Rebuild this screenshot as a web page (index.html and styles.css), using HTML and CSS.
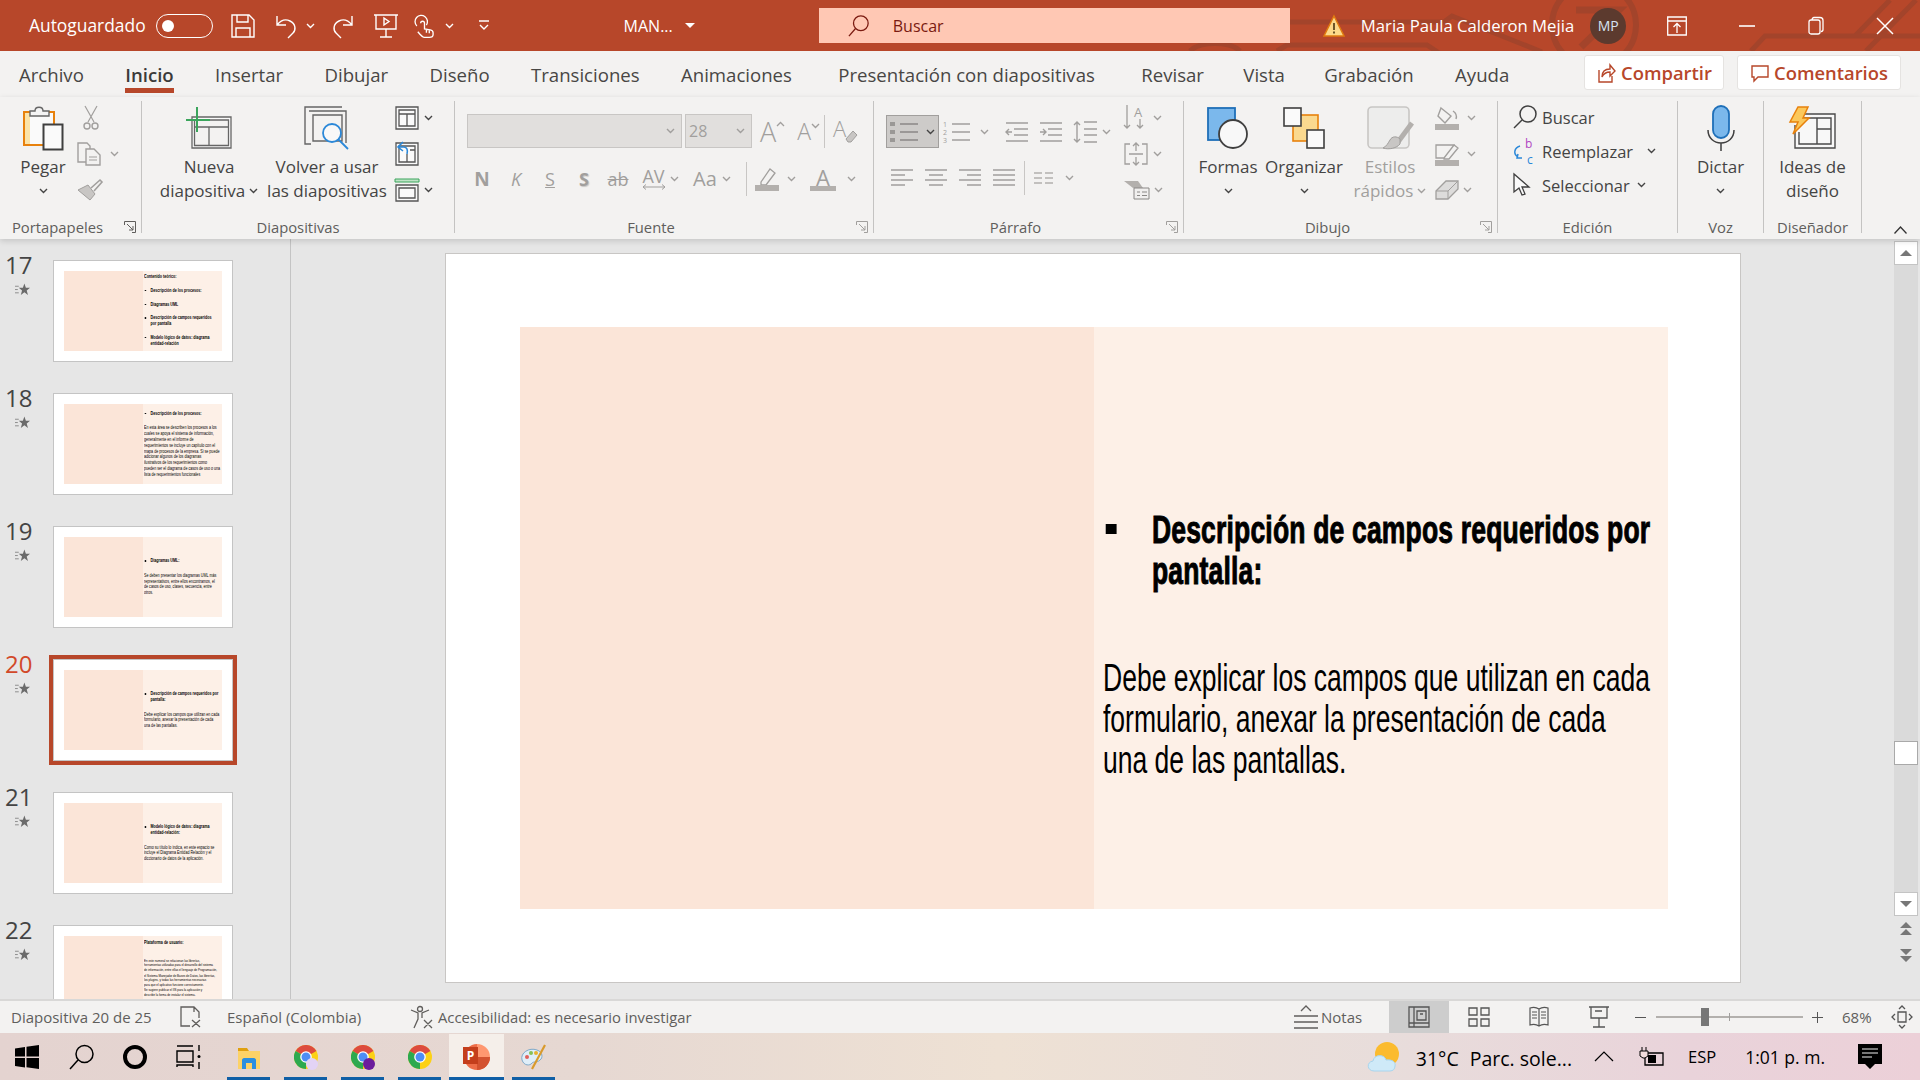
FILE: index.html
```html
<!DOCTYPE html>
<html lang="es">
<head>
  <meta charset="UTF-8">
  <title>MAN... - PowerPoint</title>
  <link rel="stylesheet" href="styles.css">
</head>
<body>

<svg class="defs" width="0" height="0">
  <symbol id="chev" viewBox="0 0 9 6"><path d="M1 1l3.5 3.5L8 1" fill="none" stroke="currentColor" stroke-width="1.4"/></symbol>
  <symbol id="launch" viewBox="0 0 12 12"><path d="M.5 4V.5h11v11H8M3 3l6 6M5 9h4V5" fill="none" stroke="currentColor"/></symbol>
  <symbol id="star" viewBox="0 0 16 14"><path d="M10 0l1.600 4.600h4.400l-3.500 2.900 1.300 4.800-3.800-2.800-3.800 2.800 1.300-4.800-3.500-2.900h4.400z" fill="#6b6b6b"/><path d="M0 3h4M0 6.500h3M0 10h4" stroke="#8a8a8a"/></symbol>
  <symbol id="chrome" viewBox="0 0 24 24">
    <circle cx="12" cy="12" r="12" fill="#fcd116"/>
    <path d="M12 12L1.600 6A12 12 0 0 1 22.400 6Z" fill="#dd4b3e"/>
    <path d="M12 12L12 24A12 12 0 0 1 1.600 6Z" fill="#2da94f"/>
    <circle cx="12" cy="12" r="5.800" fill="#fff"/><circle cx="12" cy="12" r="4.500" fill="#4e8df5"/>
  </symbol>
</svg>

<div class="app">

  <header class="titlebar">
    <svg class="title-pattern" viewBox="0 0 1920 51" width="1920" height="51">
      <g fill="none" stroke="#a3442b" stroke-width="5">
        <path d="M1290 22h154l8-6 90 36M1277 51l10-6h140l12 8"/>
        <circle cx="1594" cy="25" r="42" stroke-width="6"/>
        <path d="M1576 10h43l-38 37" stroke-width="7"/>
        <path d="M1751 51l14-15h155M1855 36l35-36M1866 51l50-51"/>
        <path d="M1190 51c10-10 40-10 50 0"/>
      </g>
    </svg>
    <span class="title-text autosave">Autoguardado</span>
    <span class="toggle"><i></i></span>
    <svg class="qat save" viewBox="0 0 24 24"><path d="M1 1h17l5 5v17H1zM6 1v7h11V1M5 23v-9h14v9"/></svg>
    <svg class="qat undo" viewBox="0 0 24 24"><path d="M3 2v9h9M3 11c4-5 9-6 13-4 6 3 6 9 3 12l-5 5"/></svg>
    <svg class="qat-chev chev-undo"><use href="#chev"/></svg>
    <svg class="qat redo" viewBox="0 0 24 24"><path d="M21 2v9h-9M21 11c-4-5-9-6-13-4-6 3-6 9-3 12l5 5"/></svg>
    <svg class="qat present" viewBox="0 0 24 24"><path d="M0 1h24M2 1v14h20V1M12 15v8M6 23h12M10 4l5 3.500-5 3.500z"/></svg>
    <svg class="qat touch" viewBox="0 0 22 24"><path d="M3 12a6.500 6.500 0 1 1 10-1M7 9a2 2 0 0 1 4 0v6l6 1c2 .5 3 2 3 3v2c0 2-2 3-4 3h-5c-2 0-3-1-7-6M13 16v3M16 16.500v3"/></svg>
    <svg class="qat-chev chev-touch"><use href="#chev"/></svg>
    <svg class="qat more" viewBox="0 0 12 12"><path d="M1 1h10M2 5l4 4 4-4"/></svg>
    <span class="title-text file-name">MAN...</span>
    <span class="caret"></span>
    <div class="search">
      <svg viewBox="0 0 24 24" width="22" height="24"><circle cx="14" cy="9" r="8"/><path d="M8 15L1 23"/></svg>
      <span>Buscar</span>
    </div>
    <svg class="warn" viewBox="0 0 22 22" width="22" height="22"><path d="M11 1l10 20H1z" fill="#fcd98a" stroke="#e07b10" stroke-width="1.500"/><path d="M11 8v7M11 16.500v2" stroke="#4a3510" stroke-width="1.600"/></svg>
    <span class="title-text user-name">Maria Paula Calderon Mejia</span>
    <span class="avatar">MP</span>
    <svg class="win-btn ribbon-opts" viewBox="0 0 20 20"><path d="M.7 1h18.600v18H.7zM.7 5h18.600M10 17v-9M6.500 11L10 7.500l3.500 3.500"/></svg>
    <svg class="win-btn win-min" viewBox="0 0 16 20"><path d="M0 10h16" stroke-width="1.600"/></svg>
    <svg class="win-btn win-max" viewBox="0 0 16 20"><path d="M1 6c0-1 1-2 2-2h7c1 0 2 1 2 2v10c0 1-1 2-2 2H3c-1 0-2-1-2-2zM4 4c0-1.500 1-2.500 2-2.500h6c2 0 3 1 3 3v9c0 1-.5 2-2 2"/></svg>
    <svg class="win-btn win-close" viewBox="0 0 16 20"><path d="M0 2l16 16M16 2L0 18" stroke-width="1.500"/></svg>
  </header>

  <nav class="tabs">
    <span class="tab first">Archivo</span>
    <span class="tab active">Inicio</span>
    <span class="tab">Insertar</span>
    <span class="tab">Dibujar</span>
    <span class="tab">Diseño</span>
    <span class="tab">Transiciones</span>
    <span class="tab">Animaciones</span>
    <span class="tab wide">Presentación con diapositivas</span>
    <span class="tab wide">Revisar</span>
    <span class="tab narrow">Vista</span>
    <span class="tab narrow">Grabación</span>
    <span class="tab">Ayuda</span>
    <div class="share-btns">
      <span class="share-btn share">
        <svg viewBox="0 0 18 20" width="18" height="20"><path d="M1 7v12h13v-6M4 14c0-6 4-8 8-8V2l5 6-5 5V9c-4 0-6 1-8 5z" fill="none" stroke="#b7472a" stroke-width="1.400"/></svg>
        Compartir
      </span>
      <span class="share-btn comments">
        <svg viewBox="0 0 18 20" width="18" height="20"><path d="M1 3h16v11H7l-4 4v-4H1z" fill="none" stroke="#b7472a" stroke-width="1.400"/></svg>
        Comentarios
      </span>
    </div>
  </nav>

  <section class="ribbon">

    <div class="group g-clip has-launcher">
      <div class="group-body">
        <div class="big-btn pegar">
          <div class="big-icon">
            <svg viewBox="0 0 41 45" width="41" height="45">
              <rect x="1" y="6" width="30" height="33" fill="#fbe3a8" stroke="#e8810c" stroke-width="2"/>
              <rect x="7" y="7" width="23" height="31" fill="#fafafa"/>
              <path d="M7 10V5h5c0-5 8-5 8 0h6v5z" fill="#f4f4f4" stroke="#666" stroke-width="1.400"/>
              <rect x="20.500" y="18.500" width="19" height="25" fill="#fafafa" stroke="#3f3f3f" stroke-width="2"/>
            </svg>
          </div>
          <span class="big-line">Pegar</span>
          <svg class="chev dark"><use href="#chev"/></svg>
        </div>
        <div class="tool-col">
          <div class="tool-row"><svg class="i-cut" viewBox="0 0 16 24" width="16" height="24"><path d="M2 0l9 16M14 0L5 16" stroke="#a19f9d" fill="none" stroke-width="1.200"/><circle cx="4" cy="20" r="3" fill="none" stroke="#a19f9d" stroke-width="1.400"/><circle cx="12" cy="20" r="3" fill="none" stroke="#a19f9d" stroke-width="1.400"/></svg></div>
          <div class="tool-row"><svg viewBox="0 0 25 24" width="25" height="24"><path d="M9 20H1V1h9l3 3v3M9 7h8l6 6v10H9z" fill="none" stroke="#a19f9d" stroke-width="1.400"/><path d="M12 15h8M12 18h8" stroke="#a19f9d"/></svg><svg class="chev off gap-m"><use href="#chev"/></svg></div>
          <div class="tool-row"><svg viewBox="0 0 26 22" width="26" height="22"><path d="M1 11l12 10 5-6-7-9z" fill="#c8c6c4" stroke="#a19f9d"/><path d="M14 9l9-8 2 2-8 9" fill="none" stroke="#a19f9d" stroke-width="1.600"/></svg></div>
        </div>
      </div>
      <div class="group-label">Portapapeles</div>
      <svg class="launcher dark"><use href="#launch"/></svg>
    </div>

    <div class="group g-slides">
      <div class="group-body">
        <div class="big-btn nueva">
          <div class="big-icon">
            <svg viewBox="0 0 46 42" width="46" height="42">
              <path d="M6 10h39v31H6zM8.500 13v25.500h34V13zM9 20h33M23 20v18" fill="#fafafa" stroke="#666" stroke-width="1.300"/>
              <path d="M11 0v25M0 13h24" stroke="#3ba55c" stroke-width="2"/>
            </svg>
          </div>
          <span class="big-line">Nueva</span>
          <span class="big-line">diapositiva <svg class="chev dark"><use href="#chev"/></svg></span>
        </div>
        <div class="big-btn volver">
          <div class="big-icon">
            <svg viewBox="0 0 46 44" width="46" height="44">
              <path d="M38 1H1v37h6M5 5h37v32M9 9h29v26H9z" fill="none" stroke="#666" stroke-width="1.400"/>
              <circle cx="28" cy="27" r="9" fill="#f8f8f8" stroke="#2b88d8" stroke-width="1.800"/>
              <path d="M34 33l10 10" stroke="#2b88d8" stroke-width="1.800"/>
            </svg>
          </div>
          <span class="big-line">Volver a usar</span>
          <span class="big-line">las diapositivas</span>
        </div>
        <div class="tool-col">
          <div class="tool-row"><svg viewBox="0 0 24 24" width="24" height="24"><path d="M1 1h22v22H1zM4 4h16v16H4zM4 8h16M12 8v12" fill="#fafafa" stroke="#555" stroke-width="1.300"/></svg><svg class="chev dark gap-s"><use href="#chev"/></svg></div>
          <div class="tool-row"><svg viewBox="0 0 24 24" width="24" height="24"><path d="M1 1h22v22H1zM4 4h16v16H4zM15 8h5M12 12v8" fill="#fafafa" stroke="#555" stroke-width="1.300"/><path d="M8 0L3 5l5 4M3 5h6c3 0 4 3 3 7" fill="none" stroke="#2b88d8" stroke-width="1.600"/></svg></div>
          <div class="tool-row"><svg viewBox="0 0 24 24" width="24" height="24"><path d="M0 1h24v3H0z" fill="#bfe3c6" stroke="#3ba55c"/><path d="M1 7h22v16H1zM4 10h16v10H4z" fill="#fafafa" stroke="#555" stroke-width="1.300"/></svg><svg class="chev dark gap-s"><use href="#chev"/></svg></div>
        </div>
      </div>
      <div class="group-label">Diapositivas</div>
    </div>

    <div class="group g-font has-launcher">
      <div class="group-body stacked">
        <div class="font-row1">
          <span class="combo combo-font"><svg class="chev off"><use href="#chev"/></svg></span>
          <span class="combo combo-size"><b>28</b><svg class="chev off"><use href="#chev"/></svg></span>
          <span class="grow-a big">A<svg class="mini" viewBox="0 0 9 6"><path d="M1 5l3.500-3.500L8 5" fill="none" stroke="#a19f9d" stroke-width="1.300"/></svg></span>
          <span class="grow-a small">A<svg class="mini"><use href="#chev"/></svg></span>
          <i class="v-sep"></i>
          <svg class="clear-fmt" viewBox="0 0 24 24" width="24" height="24"><text x="0" y="18" class="clear-a">A</text><path d="M13 20l7-8 4 4-6 7h-3z" fill="#c8c6c4" stroke="#a19f9d"/></svg>
        </div>
        <div class="font-row2">
          <span class="fmt bold">N</span>
          <span class="fmt ital">K</span>
          <span class="fmt under">S</span>
          <span class="fmt shadow">S</span>
          <span class="fmt strike">ab</span>
          <span class="fmt kern"><span class="kern-stack">AV<svg viewBox="0 0 22 6" width="22" height="6"><path d="M0 3h22M3 .5L0 3l3 2.500M19 .5L22 3l-3 2.500" fill="none" stroke="#a19f9d"/></svg></span><svg class="chev off"><use href="#chev"/></svg></span>
          <span class="fmt case">Aa<svg class="chev off"><use href="#chev"/></svg></span>
          <i class="v-sep low"></i>
          <svg class="hi-icon" viewBox="0 0 24 24" width="24" height="24"><path d="M6 15L15 2l5 4-9 12H6z" fill="none" stroke="#a19f9d" stroke-width="1.300"/><path d="M0 18h24v6H0z" fill="#b3b0ad"/></svg>
          <svg class="chev off gap-m"><use href="#chev"/></svg>
          <span class="color-a">A</span>
          <svg class="chev off gap-l"><use href="#chev"/></svg>
        </div>
      </div>
      <div class="group-label">Fuente</div>
      <svg class="launcher off"><use href="#launch"/></svg>
    </div>

    <div class="group g-para has-launcher">
      <div class="group-body">
        <div class="para-left stacked">
          <div class="para-row1">
            <span class="bullets-btn">
              <svg viewBox="0 0 30 24" width="30" height="24"><path d="M0 2h5v4H0zM0 10h5v4H0zM0 18h5v4H0z" fill="#9a9896"/><path d="M10 4h18M10 12h18M10 20h18" stroke="#8a8886" stroke-width="1.500"/></svg>
              <svg class="chev dark"><use href="#chev"/></svg>
            </span>
            <svg class="gap-num" viewBox="0 0 28 24" width="28" height="24"><text x="0" y="7" class="tiny-num">1</text><text x="0" y="15" class="tiny-num">2</text><text x="0" y="23" class="tiny-num">3</text><path d="M9 4h18M9 12h18M9 20h18" stroke="#a19f9d" stroke-width="1.400"/></svg>
            <svg class="chev off gap-num-chev"><use href="#chev"/></svg>
            <svg class="gap-in" viewBox="0 0 22 24" width="22" height="24"><path d="M0 3h22M8 9h14M8 15h14M0 21h22M6 12H0m3-3l-3 3 3 3" fill="none" stroke="#a19f9d" stroke-width="1.400"/></svg>
            <svg class="gap-12" viewBox="0 0 22 24" width="22" height="24"><path d="M0 3h22M8 9h14M8 15h14M0 21h22M0 12h6m-3-3l3 3-3 3" fill="none" stroke="#a19f9d" stroke-width="1.400"/></svg>
            <svg class="gap-11" viewBox="0 0 25 26" width="25" height="26"><path d="M4 3v20M1 6l3-3 3 3M1 20l3 3 3-3M11 3h13M11 10h13M11 16h13M11 23h13" fill="none" stroke="#a19f9d" stroke-width="1.400"/></svg>
            <svg class="chev off gap-xs"><use href="#chev"/></svg>
          </div>
          <div class="para-row2">
            <svg viewBox="0 0 22 20" width="22" height="20"><path d="M0 2h22M0 7h14M0 12h22M0 17h14" stroke="#a19f9d" stroke-width="1.400"/></svg>
            <svg viewBox="0 0 22 20" width="22" height="20"><path d="M0 2h22M4 7h14M0 12h22M4 17h14" stroke="#a19f9d" stroke-width="1.400"/></svg>
            <svg viewBox="0 0 22 20" width="22" height="20"><path d="M0 2h22M8 7h14M0 12h22M8 17h14" stroke="#a19f9d" stroke-width="1.400"/></svg>
            <svg viewBox="0 0 22 20" width="22" height="20"><path d="M0 2h22M0 7h22M0 12h22M0 17h22" stroke="#a19f9d" stroke-width="1.400"/></svg>
            <i class="v-sep low"></i>
            <svg class="cols" viewBox="0 0 19 12" width="19" height="12"><path d="M0 1h8M11 1h8M0 6h8M11 6h8M0 11h8M11 11h8" stroke="#b3b0ad" stroke-width="1.300"/></svg>
            <svg class="chev off"><use href="#chev"/></svg>
          </div>
        </div>
        <div class="tool-col">
          <div class="tool-row"><svg viewBox="0 0 24 26" width="24" height="26"><path d="M3 0v23M0 20l3 3 3-3M16 14v9M13 20l3 3 3-3" fill="none" stroke="#a19f9d" stroke-width="1.300"/><text x="10" y="12" class="tiny-a">A</text></svg><svg class="chev off gap-s"><use href="#chev"/></svg></div>
          <div class="tool-row"><svg viewBox="0 0 24 24" width="24" height="24"><path d="M6 2H1v20h5M18 2h5v20h-5M5 12h14M12 1v8M9 4l3-3 3 3M12 15v8M9 20l3 3 3-3" fill="none" stroke="#a19f9d" stroke-width="1.300"/></svg><svg class="chev off gap-s"><use href="#chev"/></svg></div>
          <div class="tool-row"><svg viewBox="0 0 26 20" width="26" height="20"><path d="M0 1h14l5 7H9z" fill="#b3b0ad"/><path d="M10 8h15v11H10zM13 12h3M18 12h5M13 15.500h3M18 15.500h5" fill="#f0efee" stroke="#8a8886"/></svg><svg class="chev off gap-xs"><use href="#chev"/></svg></div>
        </div>
      </div>
      <div class="group-label">Párrafo</div>
      <svg class="launcher off"><use href="#launch"/></svg>
    </div>

    <div class="group g-draw has-launcher">
      <div class="group-body">
        <div class="big-btn formas">
          <div class="big-icon">
            <svg viewBox="0 0 42 42" width="42" height="42"><rect x="1" y="1" width="27" height="32" fill="#7bb8ec" stroke="#1e6fb8" stroke-width="1.800"/><circle cx="26" cy="27" r="14" fill="#f8f8f8" stroke="#3f3f3f" stroke-width="1.800"/></svg>
          </div>
          <span class="big-line">Formas</span>
          <svg class="chev dark"><use href="#chev"/></svg>
        </div>
        <div class="big-btn organizar">
          <div class="big-icon">
            <svg viewBox="0 0 42 42" width="42" height="42"><rect x="10" y="8" width="25" height="26" fill="#fad98f" stroke="#e8810c" stroke-width="1.600"/><rect x="1" y="1" width="17" height="18" fill="#fafafa" stroke="#3f3f3f" stroke-width="1.600"/><rect x="24" y="23" width="17" height="18" fill="#fafafa" stroke="#3f3f3f" stroke-width="1.600"/></svg>
          </div>
          <span class="big-line">Organizar</span>
          <svg class="chev dark"><use href="#chev"/></svg>
        </div>
        <div class="big-btn off-text estilos">
          <div class="big-icon">
            <svg viewBox="0 0 46 44" width="46" height="44"><rect x="1" y="1" width="41" height="41" rx="4" fill="#ededec" stroke="#c8c6c4" stroke-width="1.600"/><path d="M45 17L31 36" stroke="#b3b0ad" stroke-width="5"/><path d="M33 33c-3-3-8-3-10 1-2 3-3 6-7 8 6 2 14 0 17-4z" fill="#c8c6c4" stroke="#a19f9d"/></svg>
          </div>
          <span class="big-line">Estilos</span>
          <span class="big-line">rápidos <svg class="chev off"><use href="#chev"/></svg></span>
        </div>
        <div class="tool-col">
          <div class="tool-row"><svg viewBox="0 0 24 24" width="24" height="24"><path d="M6 2l10 8-6 7-7-7zM18 5c3 2 4 5 3 8" fill="none" stroke="#a19f9d" stroke-width="1.400"/><path d="M0 18h24v6H0z" fill="#b3b0ad"/></svg><svg class="chev off gap-m"><use href="#chev"/></svg></div>
          <div class="tool-row"><svg viewBox="0 0 24 24" width="24" height="24"><path d="M20 3H1v13h8M9 16l10-13 4 3-9 11h-5z" fill="none" stroke="#a19f9d" stroke-width="1.300"/><path d="M0 18h24v6H0z" fill="#b3b0ad"/></svg><svg class="chev off gap-m"><use href="#chev"/></svg></div>
          <div class="tool-row"><svg viewBox="0 0 24 20" width="24" height="20"><path d="M1 11L11 1h12v8L13 19H1z" fill="#dddcdb" stroke="#a19f9d" stroke-width="1.300"/><path d="M1 11h12v8M13 11L23 1" fill="none" stroke="#a19f9d"/></svg><svg class="chev off gap-xs"><use href="#chev"/></svg></div>
        </div>
      </div>
      <div class="group-label">Dibujo</div>
      <svg class="launcher off"><use href="#launch"/></svg>
    </div>

    <div class="group g-edit">
      <div class="group-body edit-rows">
        <div class="edit-row"><span class="edit-ico"><svg viewBox="0 0 24 24" width="24" height="24"><circle cx="15" cy="9" r="8" fill="none" stroke="#3f3f3f" stroke-width="1.500"/><path d="M9 15L1 23" stroke="#3f3f3f" stroke-width="1.500"/></svg></span>Buscar</div>
        <div class="edit-row"><span class="edit-ico"><svg viewBox="0 0 24 26" width="24" height="26"><text x="12" y="10" class="rep-b">b</text><text x="14" y="26" class="rep-c">c</text><path d="M7 8c-6 2-7 8-2 11M9 20H4l1-4" fill="none" stroke="#2b88d8" stroke-width="1.500"/></svg></span>Reemplazar<svg class="chev dark chev-rep"><use href="#chev"/></svg></div>
        <div class="edit-row"><span class="edit-ico"><svg viewBox="0 0 17 24" width="17" height="24"><path d="M1 1v18l5-4 3 7 3-1-3-7h7z" fill="#fafafa" stroke="#3f3f3f" stroke-width="1.300"/></svg></span>Seleccionar<svg class="chev dark chev-sel"><use href="#chev"/></svg></div>
      </div>
      <div class="group-label">Edición</div>
    </div>

    <div class="group g-voice">
      <div class="group-body">
        <div class="big-btn full">
          <div class="big-icon">
            <svg viewBox="0 0 28 46" width="28" height="46"><rect x="6" y="1" width="16" height="32" rx="8" fill="#7bb8ec" stroke="#1e6fb8" stroke-width="1.800"/><path d="M1 25c0 8 6 13 13 13s13-5 13-13M14 38v8" fill="none" stroke="#3f3f3f" stroke-width="1.500"/></svg>
          </div>
          <span class="big-line">Dictar</span>
          <svg class="chev dark"><use href="#chev"/></svg>
        </div>
      </div>
      <div class="group-label">Voz</div>
    </div>

    <div class="group g-design">
      <div class="group-body">
        <div class="big-btn full">
          <div class="big-icon">
            <svg viewBox="0 0 46 42" width="46" height="42"><path d="M10 7h35v34H5V18M13 11h28v26H9v-12M27 11v26M27 22h14" fill="#f8f8f8" stroke="#4a4a4a" stroke-width="1.400"/><path d="M8 0h10l-5 11h6L3 27l5-12H0z" fill="#fbc85b" stroke="#e8810c" stroke-width="1.500"/></svg>
          </div>
          <span class="big-line">Ideas de</span>
          <span class="big-line">diseño</span>
        </div>
      </div>
      <div class="group-label">Diseñador</div>
    </div>

    <svg class="collapse" viewBox="0 0 13 8" width="13" height="8"><path d="M.5 7.500L6.500 1l6 6.500" fill="none" stroke="#333" stroke-width="1.300"/></svg>
  </section>

  <main class="workspace">
    <aside class="thumbs">
      <div class="thumb-row">
        <div class="thumb-num">17<svg><use href="#star"/></svg></div>
        <div class="thumb"><div class="t-left"></div><div class="t-right top">
          <div class="t-scale">
            <p class="t-b">Contenido teórico:</p>
            <p class="t-b t-li sp">Descripción de los procesos:</p>
            <p class="t-b t-li sp">Diagramas UML</p>
            <p class="t-b t-li sp">Descripción de campos requeridos<br>por pantalla</p>
            <p class="t-b t-li sp">Modelo lógico de datos: diagrama<br>entidad-relación</p>
          </div>
        </div></div>
      </div>
      <div class="thumb-row">
        <div class="thumb-num">18<svg><use href="#star"/></svg></div>
        <div class="thumb"><div class="t-left"></div><div class="t-right">
          <div class="t-scale">
            <p class="t-b t-li">Descripción de los procesos:</p>
            <p class="sp2">En esta área se describen los procesos a los<br>cuales se apoya el sistema de información,<br>generalmente en el informe de<br>requerimientos se incluye un capítulo con el<br>mapa de procesos de la empresa. Si se puede<br>adicionar algunos de los diagramas<br>ilustrativos de los requerimientos como<br>pueden ser el diagrama de casos de uso o una<br>lista de requerimientos funcionales</p>
          </div>
        </div></div>
      </div>
      <div class="thumb-row">
        <div class="thumb-num">19<svg><use href="#star"/></svg></div>
        <div class="thumb"><div class="t-left"></div><div class="t-right">
          <div class="t-scale">
            <p class="t-b t-li">Diagramas UML:</p>
            <p class="sp2">Se deben presentar los diagramas UML más<br>representativos, entre ellos encontramos, el<br>de casos de uso, clases, secuencia, entre<br>otros.</p>
          </div>
        </div></div>
      </div>
      <div class="thumb-row current">
        <div class="thumb-num">20<svg><use href="#star"/></svg></div>
        <div class="thumb"><div class="t-left"></div><div class="t-right">
          <div class="t-scale">
            <p class="t-b t-li">Descripción de campos requeridos por<br>pantalla:</p>
            <p class="sp2">Debe explicar los campos que utilizan en cada<br>formulario, anexar la presentación de cada<br>una de las pantallas.</p>
          </div>
        </div></div>
      </div>
      <div class="thumb-row">
        <div class="thumb-num">21<svg><use href="#star"/></svg></div>
        <div class="thumb"><div class="t-left"></div><div class="t-right">
          <div class="t-scale">
            <p class="t-b t-li">Modelo lógico de datos: diagrama<br>entidad-relación:</p>
            <p class="sp2">Como su título lo indica, en este espacio se<br>incluye el Diagrama Entidad Relación y el<br>diccionario de datos de la aplicación.</p>
          </div>
        </div></div>
      </div>
      <div class="thumb-row">
        <div class="thumb-num">22<svg><use href="#star"/></svg></div>
        <div class="thumb"><div class="t-left"></div><div class="t-right top plat">
          <div class="t-scale">
            <p class="t-b">Plataforma de usuario:</p>
            <p class="t-small first">En este numeral se relacionan las librerías,<br>herramientas utilizadas para el desarrollo del sistema<br>de información, entre ellas el lenguaje de Programación,</p>
            <p class="t-small">el Sistema Manejador de Bases de Datos, las librerías,<br>los plugins, y todas las herramientas necesarias<br>para que el aplicativo funcione correctamente.</p>
            <p class="t-small">Se sugiere publicar el IIS para la aplicación y<br>describir la forma de instalar el sistema.</p>
          </div>
        </div></div>
      </div>
    </aside>

    <div class="canvas">
      <article class="slide">
        <div class="panel-left"></div>
        <div class="panel-right">
          <div class="slide-text">
            <div class="slide-heading"><span class="square"></span><span class="slide-title">Descripción de campos requeridos por<br>pantalla:</span></div>
            <p class="slide-body">Debe explicar los campos que utilizan en cada<br>formulario, anexar la presentación de cada<br>una de las pantallas.</p>
          </div>
        </div>
      </article>
    </div>

    <div class="scroll-col">
      <div class="scrollbar">
        <span class="sb-btn"><svg viewBox="0 0 12 6" width="12" height="6"><path d="M0 6L6 0l6 6z" fill="#777"/></svg></span>
        <span class="sb-thumb"></span>
        <span class="sb-btn"><svg viewBox="0 0 12 6" width="12" height="6"><path d="M0 0l6 6 6-6z" fill="#777"/></svg></span>
      </div>
      <svg class="sb-page" viewBox="0 0 12 13" width="12" height="13"><path d="M0 6l6-6 6 6zM0 13l6-6 6 6z" fill="#777"/></svg>
      <svg class="sb-page next" viewBox="0 0 12 13" width="12" height="13"><path d="M0 0l6 6 6-6zM0 7l6 6 6-6z" fill="#777"/></svg>
    </div>
  </main>

  <footer class="statusbar">
    <span class="st st-slide">Diapositiva 20 de 25</span>
    <svg class="st-spell" viewBox="0 0 22 22" width="22" height="22"><path d="M10 20H1V1h13l5 5v6M14 1v5M12 14l8 7M20 14l-8 7" fill="none" stroke="#605e5c" stroke-width="1.300"/></svg>
    <span class="st st-lang">Español (Colombia)</span>
    <svg class="st-access" viewBox="0 0 23 24" width="23" height="24"><circle cx="10" cy="4" r="2.500" fill="none" stroke="#605e5c" stroke-width="1.300"/><path d="M1 5l7 3v6l-4 9M19 5l-7 3v5M14 15l8 8M22 15l-8 8" fill="none" stroke="#605e5c" stroke-width="1.300"/></svg>
    <span class="st st-acc-text">Accesibilidad: es necesario investigar</span>
    <span class="st-right">
      <svg class="st-notes" viewBox="0 0 24 24" width="24" height="24"><path d="M7 6l5-5 5 5M0 11h24M0 17h24M0 23h24" fill="none" stroke="#605e5c" stroke-width="1.300"/></svg>
      <span class="st st-notes-text">Notas</span>
      <span class="view-btn on"><svg viewBox="0 0 22 22" width="22" height="22"><path d="M1 1h20v20H1zM6 1v20M1 17h20M9 5h9v9H9zM12 8h3" fill="none" stroke="#555" stroke-width="1.300"/></svg></span>
      <span class="view-btn"><svg viewBox="0 0 22 22" width="22" height="22"><path d="M1 2h8v7H1zM13 2h8v7h-8zM1 13h8v7H1zM13 13h8v7h-8z" fill="none" stroke="#555" stroke-width="1.300"/></svg></span>
      <span class="view-btn"><svg viewBox="0 0 20 24" width="20" height="24"><path d="M10 4C7 2 4 2 1 3v17c3-1 6-1 9 1 3-2 6-2 9-1V3c-3-1-6-1-9 1zM10 4v17M3 7h5M3 10h5M3 13h5M12 7h5M12 10h5M12 13h5" fill="none" stroke="#555" stroke-width="1.200"/></svg></span>
      <span class="view-btn"><svg viewBox="0 0 20 24" width="20" height="24"><path d="M0 2h20M2 2v11h16V2M10 13v9M4 22h12M6 6h7" fill="none" stroke="#555" stroke-width="1.300"/></svg></span>
      <span class="zoom-minus"></span>
      <span class="slider"><i class="slider-knob"></i><i class="slider-tick"></i></span>
      <span class="zoom-plus"></span>
      <span class="st st-zoom">68%</span>
      <svg class="st-fit" viewBox="0 0 22 24" width="22" height="24"><path d="M7 7h8v10H7zM4 9l-3 3 3 3M18 9l3 3-3 3M8 4l3-3 3 3M8 20l3 3 3-3" fill="none" stroke="#555" stroke-width="1.300"/></svg>
    </span>
  </footer>

  <footer class="taskbar">
    <svg class="tb-win" viewBox="0 0 24 24" width="24" height="24"><path d="M0 3.500l10-1.500v9.500H0zM11.500 1.800L24 0v11.500H11.500zM0 13h10v9.500L0 21zM11.500 13H24v11l-12.500-1.800z" fill="#000"/></svg>
    <svg class="tb-search" viewBox="0 0 25 26" width="25" height="26"><circle cx="15.500" cy="10" r="8.500" fill="none" stroke="#000" stroke-width="1.500"/><path d="M9 16L1 25" stroke="#000" stroke-width="1.500"/></svg>
    <span class="tb-cortana"></span>
    <svg class="tb-tasks" viewBox="0 0 24 24" width="24" height="24"><path d="M0 6h16v11H0zM0 1h16M0 22V20h16v2M22 0v6M22 17v7" fill="none" stroke="#000" stroke-width="1.400"/><circle cx="22" cy="11.500" r="1.500"/></svg>
    <span class="tb-app app-files"><svg viewBox="0 0 22 24" width="22" height="24"><path d="M0 3h9l2 3H0z" fill="#e0a010"/><path d="M0 6h22v18H0z" fill="#fcd267"/><path d="M4 24v-9c0-1 1-2 2-2h10c1 0 2 1 2 2v9h-4v-6H8v6z" fill="#2b8fe0"/></svg></span>
    <span class="tb-app app-c1"><svg width="24" height="24"><use href="#chrome"/></svg><i class="chrome-badge lilac"></i></span>
    <span class="tb-app app-c2"><svg width="24" height="24"><use href="#chrome"/></svg><i class="chrome-badge violet"></i></span>
    <span class="tb-app app-c3"><svg width="24" height="24"><use href="#chrome"/></svg></span>
    <span class="tb-app app-ppt"><svg viewBox="0 0 26 26" width="26" height="26"><path d="M13 0a13 13 0 0 1 13 13H13z" fill="#ff9770"/><path d="M13 0a13 13 0 0 0 0 26 13 13 0 0 0 13-13H13z" fill="#ed6c47"/><path d="M13 13h13a13 13 0 0 1-13 13z" fill="#d35230"/></svg><b class="ppt-p">P</b></span>
    <span class="tb-app app-paint"><svg viewBox="0 0 26 26" width="26" height="26"><path d="M1 16C-1 9 8 3 16 6c6 2 6 8 3 10-3 3-6 1-8 3-2 3-8 3-10-3z" fill="#dfeef8" stroke="#7fa9c9"/><circle cx="6" cy="13" r="2" fill="#e0605a"/><circle cx="10" cy="9" r="2" fill="#88c057"/><circle cx="15" cy="9" r="2" fill="#e8b030"/><path d="M11 25L24 1" stroke="#d99a2b" stroke-width="2.200"/></svg></span>
    <span class="tray">
      <svg class="tb-weather" viewBox="0 0 32 30" width="32" height="30"><circle cx="19" cy="12" r="12" fill="#fbbb2e"/><path d="M6 29c-7 0-8-9-1-10 1-7 12-7 13-1 7-1 10 3 9 6 0 3-2 5-5 5z" fill="#cfeaf8" stroke="#a8d5ee"/></svg>
      <span class="tray-temp">31°C</span>
      <span class="tray-sky">Parc. sole...</span>
      <svg class="tray-up" viewBox="0 0 20 11" width="20" height="11"><path d="M1 10l9-9 9 9" fill="none" stroke="#000" stroke-width="1.200"/></svg>
      <svg class="tray-batt" viewBox="0 0 24 20" width="24" height="20"><path d="M5 6h18v12H5z" fill="none" stroke="#000" stroke-width="1.300"/><path d="M8 8h8v8H8z" fill="#000"/><path d="M2 0v4M6 0v4M0 4h8v5l-3 2H3L0 9z" fill="#f0dcdc" stroke="#000"/></svg>
      <span class="tray-lang">ESP</span>
      <span class="tray-time">1:01 p. m.</span>
      <svg class="tray-note" viewBox="0 0 24 26" width="24" height="26"><path d="M0 0h24v20h-7l-5 5-5-5H0z" fill="#000"/><path d="M4 5h16M4 9h16M4 13h10" stroke="#eee" stroke-width="1.200"/></svg>
    </span>
  </footer>

</div>

</body>
</html>
```

FILE: styles.css
```css
* {
  box-sizing: border-box;
}

body {
  margin: 0;
  font-family: "Open Sans", "Noto Sans", sans-serif;
  color: #444;
  background: #e6e6e6;
}

.defs {
  display: block;
  height: 0;
}

svg {
  display: block;
  flex: none;
  overflow: visible;
}

p {
  margin: 0;
}

.app {
  width: 1920px;
  height: 1080px;
  display: flex;
  flex-direction: column;
  overflow: hidden;
}

/* title bar */
.titlebar {
  height: 51px;
  flex: none;
  position: relative;
  display: flex;
  align-items: center;
  background: #b7472a;
  color: #fff;
  padding-left: 29px;
}

.title-pattern {
  position: absolute;
  left: 0;
  top: 0;
  overflow: hidden;
}

.titlebar > *:not(.title-pattern) {
  position: relative;
}

.title-text {
  font-size: 16px;
  white-space: nowrap;
}

.autosave { font-size: 17.4px; margin-top: -1px; }

.toggle {
  width: 57px;
  height: 24px;
  margin-left: 10px;
  border: 1.5px solid #fff;
  border-radius: 12px;
  display: flex;
  align-items: center;
  padding-left: 5px;
}

.toggle i {
  width: 12px;
  height: 12px;
  border-radius: 50%;
  background: #fff;
}

.qat {
  width: 24px;
  height: 24px;
  fill: none;
  stroke: #fff;
  stroke-width: 1.4;
}

.qat-chev {
  width: 9px;
  height: 6px;
  color: #fff;
}

.save { margin-left: 18px; }
.undo { margin-left: 19px; }
.chev-undo { margin-left: 8px; }
.redo { margin-left: 16px; }
.present { margin-left: 19px; }
.touch { margin-left: 16px; width: 21px; }
.chev-touch { margin-left: 10px; }
.more { margin-left: 24px; width: 12px; height: 12px; }

.file-name { margin-left: 134px; }

.caret {
  margin-left: 12px;
  border-left: 5px solid transparent;
  border-right: 5px solid transparent;
  border-top: 5px solid #fff;
}

.search {
  width: 471px;
  height: 35px;
  margin-left: 124px;
  padding-left: 29px;
  display: flex;
  align-items: center;
  gap: 23px;
  background: #ffc8b4;
  color: #7a1a10;
  font-size: 16px;
}

.search svg {
  fill: none;
  stroke: #7a1a10;
  stroke-width: 1.4;
}

.warn { margin-left: 33px; }
.user-name { margin-left: 16px; font-size: 16.7px; margin-top: -1px; }

.avatar {
  width: 36px;
  height: 36px;
  margin-left: 16px;
  border-radius: 50%;
  background: #5c3a2e;
  color: #d6e4f2;
  font-size: 14px;
  display: flex;
  align-items: center;
  justify-content: center;
}

.win-btn {
  height: 20px;
  fill: none;
  stroke: #fff;
  stroke-width: 1.3;
}

.ribbon-opts { width: 20px; margin-left: 41px; }
.win-min { width: 16px; margin-left: 52px; }
.win-max { width: 16px; margin-left: 53px; }
.win-close { width: 16px; margin-left: 53px; }

/* tabs */
.tabs {
  height: 46px;
  flex: none;
  display: flex;
  align-items: flex-start;
  gap: 41.4px;
  padding-left: 19px;
  background: #f3f2f1;
  font-size: 18.6px;
  color: #484644;
}

.tab {
  height: 42px;
  line-height: 47px;
  white-space: nowrap;
}

.tab.active {
  border-bottom: 5px solid #b7472a;
  color: #3b3a39;
  font-weight: 600;
}

.tab.wide {
  margin-left: 5px;
}

.tab.narrow {
  margin-left: -2px;
}

.share-btns {
  position: absolute;
  right: 19px;
  top: 55px;
  display: flex;
  gap: 13px;
}

.share-btn {
  height: 35px;
  padding-left: 13px;
  display: flex;
  align-items: center;
  gap: 5px;
  background: #fff;
  border: 1px solid #e5e3e1;
  border-radius: 3px;
  color: #b7472a;
  font-size: 18.4px;
  font-weight: 600;
  white-space: nowrap;
}

.share { width: 140px; }
.comments { width: 164px; }

/* ribbon */
.ribbon {
  height: 142px;
  flex: none;
  display: flex;
  padding-top: 4px;
  background: #f3f2f1;
  position: relative;
  z-index: 2;
  box-shadow: 0 2px 6px rgba(0, 0, 0, 0.15);
  font-size: 17px;
}

.group {
  height: 132px;
  flex: none;
  position: relative;
  display: flex;
  flex-direction: column;
  border-right: 1px solid #c4c3c2;
}

.g-clip { width: 142px; }
.g-slides { width: 313px; }
.g-font { width: 419px; }
.g-para { width: 310px; }
.g-draw { width: 314px; }
.g-edit { width: 180px; }
.g-voice { width: 86px; }
.g-design { width: 98px; }

.group-body {
  height: 119px;
  flex: none;
  display: flex;
}

.stacked {
  flex-direction: column;
}

.group-label {
  height: 13px;
  line-height: 15px;
  font-size: 14.8px;
  text-align: center;
  color: #605e5c;
  white-space: nowrap;
}

.has-launcher .group-label {
  padding-right: 26px;
}

.launcher {
  position: absolute;
  right: 5px;
  bottom: 0;
  width: 12px;
  height: 12px;
}

.launcher.dark { color: #605e5c; }
.launcher.off { color: #a19f9d; }

.big-btn {
  display: flex;
  flex-direction: column;
  align-items: center;
  flex: none;
}

.big-btn.off-text { color: #a19f9d; }
.big-btn.full { width: 100%; }

.big-icon {
  height: 54px;
  display: flex;
  align-items: center;
  justify-content: center;
}

.big-line {
  height: 24px;
  line-height: 24px;
  white-space: nowrap;
  display: flex;
  align-items: center;
  gap: 4px;
}

.big-btn > .chev {
  margin-top: 9px;
}

.chev {
  width: 9px;
  height: 6px;
  flex: none;
}

.chev.dark { color: #444; }
.chev.off { color: #a19f9d; }

.pegar { width: 56px; margin-left: 15px; }
.nueva { width: 110px; margin-left: 12px; }
.volver { width: 120px; margin-left: 3px; }
.formas { width: 76px; margin-left: 6px; }
.organizar { width: 76px; }
.estilos { width: 86px; margin-left: 5px; }

.tool-col {
  margin-top: -1px;
}

.tool-row {
  height: 36px;
  display: flex;
  align-items: center;
}

.g-clip .tool-col { margin-left: 6px; }
.g-slides .tool-col { margin-left: 8px; }
.g-para .tool-col { margin-left: 2px; }
.g-draw .tool-col { margin-left: 2px; }
.i-cut { margin-left: 6px; }

.gap-xs { margin-left: 4px; }
.gap-s { margin-left: 5px; }
.gap-m { margin-left: 8px; }
.gap-l { margin-left: 11px; }

/* font group */
.font-row1 {
  display: flex;
  align-items: center;
  height: 34px;
  margin-top: 13px;
  padding-left: 12px;
}

.combo {
  height: 34px;
  display: flex;
  align-items: center;
  justify-content: flex-end;
  background: #e1dfdd;
  border: 1px solid #c8c6c4;
  padding-right: 6px;
  color: #a19f9d;
}

.combo-font { width: 215px; }

.combo-size {
  width: 67px;
  margin-left: 3px;
  justify-content: space-between;
  padding-left: 3px;
  font-size: 16px;
}

.combo b { font-weight: 400; }

.grow-a {
  display: flex;
  align-items: flex-start;
  color: #a19f9d;
  line-height: 1;
  font-weight: 300;
}

.grow-a.big { font-size: 27px; margin-left: 8px; }
.grow-a.small { font-size: 23px; margin-left: 12px; }

.mini {
  width: 9px;
  height: 6px;
  margin-top: 3px;
}

.v-sep {
  width: 1px;
  height: 33px;
  margin-left: 4px;
  background: #c8c6c4;
  flex: none;
}

.v-sep.low {
  height: 34px;
  margin: 0 8px;
}

.clear-fmt { margin-left: 8px; }

.clear-a {
  font-size: 22px;
  fill: #a19f9d;
  font-weight: 300;
}

.font-row2 {
  display: flex;
  align-items: center;
  height: 23px;
  margin-top: 19px;
  padding-left: 10px;
  color: #a19f9d;
}

.fmt {
  width: 34px;
  font-size: 19px;
  display: flex;
  align-items: center;
  justify-content: center;
  gap: 5px;
}

.fmt.bold { font-weight: 700; }
.fmt.ital { font-style: italic; font-size: 18px; }
.fmt.under { text-decoration: underline; font-size: 18px; }
.fmt.shadow { font-weight: 700; text-shadow: 1px 1px 1px #c8c6c4; font-size: 18px; }
.fmt.strike { text-decoration: line-through; font-size: 18px; }
.fmt.kern { width: 51px; font-size: 18px; }
.fmt.case { width: 52px; font-size: 20px; }

.kern-stack {
  display: flex;
  flex-direction: column;
  align-items: center;
  line-height: 16px;
}

.color-a {
  width: 26px;
  margin-left: 14px;
  font-size: 22px;
  line-height: 21px;
  height: 24px;
  text-align: center;
  border-bottom: 5px solid #b3b0ad;
}

/* paragraph group */
.para-left {
  width: 248px;
  flex: none;
  padding-left: 12px;
  padding-top: 14px;
}

.para-row1 {
  display: flex;
  align-items: center;
  height: 33px;
}

.bullets-btn {
  width: 53px;
  height: 33px;
  display: flex;
  align-items: center;
  justify-content: center;
  gap: 6px;
  background: #cdcbc9;
  border: 1px solid #a19f9d;
}

.gap-num { margin-left: 4px; }
.gap-num-chev { margin-left: 9px; }
.gap-in { margin-left: 17px; }
.gap-12 { margin-left: 12px; }
.gap-11 { margin-left: 11px; }

.tiny-num {
  font-size: 7px;
  fill: #a19f9d;
}

.tiny-a {
  font-size: 13px;
  fill: #a19f9d;
}

.para-row2 {
  display: flex;
  align-items: center;
  gap: 12px;
  height: 20px;
  margin-top: 20px;
  padding-left: 5px;
}

.para-row2 .v-sep.low {
  margin: 0 -3px;
}

/* editing group */
.edit-rows {
  flex-direction: column;
  padding-left: 15px;
  margin: -1px 0 1px;
  font-size: 16.5px;
}

.edit-row {
  height: 34px;
  display: flex;
  align-items: center;
  white-space: nowrap;
}

.edit-ico {
  width: 29px;
  flex: none;
}

.chev-rep { margin-left: 14px; }
.chev-sel { margin-left: 7px; }

.rep-b {
  font-size: 12px;
  fill: #b146c2;
}

.rep-c {
  font-size: 12px;
  fill: #2b88d8;
}

.collapse {
  margin-left: 32px;
  align-self: flex-end;
  margin-bottom: 5px;
}

/* workspace */
.workspace {
  height: 760px;
  flex: none;
  display: flex;
  background: #e6e6e6;
}

.thumbs {
  width: 291px;
  flex: none;
  overflow: hidden;
  padding-top: 21px;
  border-right: 1px solid #c4c4c4;
}

.thumb-row {
  height: 102px;
  margin-bottom: 31px;
  display: flex;
}

.thumb-num {
  width: 53px;
  flex: none;
  margin-top: -8px;
  padding-left: 5px;
  font-size: 24px;
  line-height: 26px;
  color: #444;
}

.thumb-num svg {
  width: 15px;
  height: 14px;
  margin: 5px 0 0 10px;
}

.current .thumb-num {
  color: #d2492a;
}

.thumb {
  width: 180px;
  height: 102px;
  flex: none;
  display: flex;
  padding: 10px;
  background: #fff;
  border: 1px solid #c4c4c4;
}

.current .thumb {
  box-shadow: 0 0 0 4px #b7472a;
}

.t-left {
  width: 79px;
  background: #fbe5d8;
}

.t-right {
  width: 79px;
  background: #fdf0e7;
  padding-left: 1px;
  display: flex;
  flex-direction: column;
  justify-content: center;
  overflow: hidden;
}

.t-right.top {
  justify-content: flex-start;
  padding-top: 3px;
}

.t-right.plat {
  padding-top: 4px;
}

.t-scale {
  width: 106px;
  flex: none;
  transform: scaleX(0.73);
  transform-origin: left center;
  font-family: "Liberation Sans Narrow", "Liberation Sans", sans-serif;
  font-size: 5px;
  line-height: 5.8px;
  white-space: nowrap;
  color: #000;
}

.t-b {
  font-weight: 700;
}

.t-li {
  padding-left: 9px;
  position: relative;
}

.t-li::before {
  content: "";
  position: absolute;
  left: 1px;
  top: 2px;
  width: 2px;
  height: 1.5px;
  background: #111;
}

.t-small {
  font-size: 4px;
  line-height: 4.6px;
  margin-top: 1px;
}

.t-small.first {
  margin-top: 13px;
}

.sp { margin-top: 8px; }
.sp2 { margin-top: 9px; }

.canvas {
  width: 1603px;
  flex: none;
  padding: 14px 0 0 154px;
}

.slide {
  width: 1296px;
  height: 730px;
  display: flex;
  padding: 73px 0 0 74px;
  background: #fff;
  border: 1px solid #c8c6c4;
}

.panel-left {
  width: 574px;
  height: 582px;
  background: #fbe5d8;
}

.panel-right {
  width: 574px;
  height: 582px;
  background: #fdf0e7;
  padding: 183px 0 0 9px;
}

.slide-text {
  width: 800px;
  transform: scaleX(0.68);
  transform-origin: left top;
  font-family: "Liberation Sans Narrow", "Liberation Sans", sans-serif;
  color: #000;
}

.slide-heading {
  display: flex;
  font-size: 39px;
  line-height: 40.5px;
  font-weight: 700;
  letter-spacing: 0.25px;
  -webkit-text-stroke: 1px #000;
}

.square {
  width: 16px;
  height: 10px;
  margin: 14px 0 0 4px;
  background: #000;
  flex: none;
}

.slide-title {
  margin-left: 52px;
  white-space: nowrap;
}

.slide-body {
  margin-top: 66px;
  font-size: 39px;
  line-height: 41px;
  white-space: nowrap;
}

.scroll-col {
  width: 26px;
  flex: none;
  padding-top: 2px;
}

.scrollbar {
  width: 24px;
  height: 675px;
  display: flex;
  flex-direction: column;
  justify-content: space-between;
  background: #dadada;
}

.sb-btn {
  width: 24px;
  height: 24px;
  display: flex;
  align-items: center;
  justify-content: center;
  background: #fff;
  border: 1px solid #c4c4c4;
}

.sb-thumb {
  width: 24px;
  height: 24px;
  margin-top: 475px;
  margin-bottom: 126px;
  background: #fff;
  border: 1px solid #a9a9a9;
}

.sb-page {
  margin: 6px 0 0 6px;
}

.sb-page.next {
  margin-top: 14px;
}

/* status bar */
.statusbar {
  height: 34px;
  flex: none;
  display: flex;
  align-items: center;
  background: #f3f2f1;
  border-top: 2px solid #d9d8d7;
  padding-left: 11px;
  color: #605e5c;
  font-size: 15px;
}

.st {
  white-space: nowrap;
}

.st-slide { width: 141px; }
.st-spell { margin-left: 28px; }
.st-lang { margin-left: 25px; width: 134px; }
.st-access { margin-left: 49px; }
.st-acc-text { margin-left: 5px; font-size: 14.8px; }

.st-right {
  margin-left: auto;
  display: flex;
  align-items: center;
  height: 100%;
}

.st-notes-text { margin-left: 3px; width: 68px; }

.view-btn {
  width: 60px;
  height: 100%;
  display: flex;
  align-items: center;
  justify-content: center;
}

.view-btn.on { background: #cdcdcd; }

.zoom-minus, .zoom-plus {
  width: 11px;
  height: 1px;
  background: #555;
  position: relative;
}

.zoom-minus { margin-left: 6px; }
.zoom-plus { margin-left: 9px; }

.zoom-plus::after {
  content: "";
  position: absolute;
  left: 5px;
  top: -5px;
  width: 1px;
  height: 11px;
  background: #555;
}

.slider {
  width: 147px;
  height: 2px;
  margin-left: 10px;
  background: #b3b0ad;
  position: relative;
}

.slider-knob {
  position: absolute;
  left: 45px;
  top: -8px;
  width: 8px;
  height: 18px;
  background: #777;
}

.slider-tick {
  position: absolute;
  left: 73px;
  top: -3px;
  width: 1px;
  height: 8px;
  background: #a19f9d;
}

.st-zoom { margin-left: 19px; width: 31px; }
.st-fit { margin: 0 7px 0 18px; }

/* taskbar */
.taskbar {
  height: 46px;
  flex: 1;
  display: flex;
  align-items: center;
  padding-left: 15px;
  background: linear-gradient(90deg, #e4d3d0 0%, #e6d8d2 30%, #eee1d4 52%, #e8dddb 72%, #e9d3da 88%, #ecd0d8 100%);
  color: #000;
}

.tb-search { margin-left: 30px; }

.tb-cortana {
  width: 24px;
  height: 24px;
  margin-left: 29px;
  border: 4px solid #000;
  border-radius: 50%;
}

.tb-tasks { margin-left: 30px; }

.tb-app {
  height: 46px;
  position: relative;
  display: flex;
  align-items: center;
  justify-content: center;
  border-bottom: 3px solid #0f5fa6;
  padding-top: 3px;
}

.app-files { width: 43px; margin-left: 26px; }
.app-c1 { width: 43px; margin-left: 14px; }
.app-c2 { width: 43px; margin-left: 14px; }
.app-c3 { width: 43px; margin-left: 14px; }
.app-ppt { width: 55px; margin-left: 8px; background: #f5efea; }
.app-paint { width: 43px; margin-left: 8px; }

.chrome-badge {
  position: absolute;
  left: 22px;
  top: 24px;
  width: 12px;
  height: 12px;
  border-radius: 50%;
}

.chrome-badge.lilac { background: #e3d3f5; }
.chrome-badge.violet { background: #6b1d9c; }

.ppt-p {
  position: absolute;
  left: 14px;
  top: 13px;
  width: 15px;
  height: 17px;
  background: #c43e1c;
  color: #fff;
  font-size: 12px;
  line-height: 17px;
  text-align: center;
}

.tray {
  margin-left: auto;
  display: flex;
  align-items: center;
  font-size: 19.5px;
}

.tray-temp { margin-left: 16px; padding-top: 4px; }
.tray-sky { margin-left: 11px; padding-top: 4px; }
.tray-up { margin-left: 22px; }
.tray-batt { margin-left: 26px; }
.tray-lang { margin-left: 24px; font-size: 16.5px; }
.tray-time { margin-left: 29px; font-size: 17.5px; }
.tray-note { margin: 0 38px 0 33px; }
```
